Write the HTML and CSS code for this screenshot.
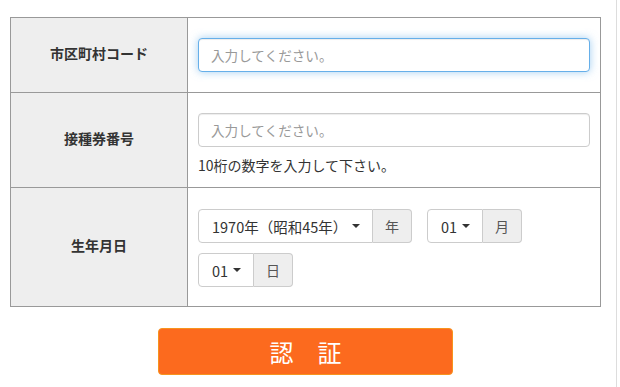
FILE: index.html
```html
<!DOCTYPE html>
<html lang="ja">
<head>
<meta charset="utf-8">
<link rel="stylesheet" href="styles.css">
</head>
<body>
<div class="page">
  <form class="auth">
    <table class="form-table">
      <tr class="row1">
        <th>市区町村コード</th>
        <td><input class="ctrl focus" type="text" placeholder="入力してください。"></td>
      </tr>
      <tr class="row2">
        <th>接種券番号</th>
        <td>
          <input class="ctrl" type="text" placeholder="入力してください。">
          <p class="help">10桁の数字を入力して下さい。</p>
        </td>
      </tr>
      <tr class="row3">
        <th>生年月日</th>
        <td>
          <div class="dates">
            <div class="group">
              <div class="sel year"><span>1970年（昭和45年）</span><i class="caret"></i></div>
              <div class="addon">年</div>
            </div>
            <div class="group">
              <div class="sel small"><span>01</span><i class="caret"></i></div>
              <div class="addon">月</div>
            </div>
            <div class="group">
              <div class="sel small"><span>01</span><i class="caret"></i></div>
              <div class="addon">日</div>
            </div>
          </div>
        </td>
      </tr>
    </table>
    <div class="actions">
      <button type="button" class="btn">認　証</button>
    </div>
  </form>
</div>
</body>
</html>
```

FILE: styles.css
```css
html, body {
  margin: 0;
  padding: 0;
  background: #fff;
}
body {
  font-family: "Noto Sans CJK JP", "Noto Sans", sans-serif;
  color: #333;
  font-size: 13px;
}
.page {
  width: 616px;
  height: 387px;
  border-right: 1px solid #ddd;
  box-sizing: content-box;
}
.auth {
  padding: 17px 0 0 10px;
  width: 591px;
}
.form-table {
  width: 591px;
  border-collapse: collapse;
  table-layout: fixed;
}
.form-table th,
.form-table td {
  border: 1px solid #999;
}
.form-table th {
  width: 176px;
  background: #eee;
  font-size: 14px;
  font-weight: bold;
  text-align: center;
  vertical-align: middle;
  padding: 0 0 4px;
}
.form-table td {
  padding: 20px 10px;
  vertical-align: top;
}
.row2 td {
  padding-bottom: 13px;
}
.row3 td {
  padding-top: 21px;
  padding-bottom: 19px;
}
.ctrl {
  display: block;
  box-sizing: border-box;
  width: 100%;
  height: 34px;
  padding: 6px 12px;
  border: 1px solid #ccc;
  border-radius: 4px;
  font-family: inherit;
  font-size: 13.6px;
  color: #333;
  background: #fff;
  box-shadow: inset 0 1px 1px rgba(0,0,0,.075);
  outline: none;
}
.ctrl::placeholder {
  color: #999;
}
.ctrl.focus {
  border-color: #66afe9;
  box-shadow: inset 0 1px 1px rgba(0,0,0,.075), 0 0 8px rgba(102,175,233,.6);
}
.help {
  margin: 9px 0 0;
  line-height: 18px;
  font-size: 14px;
  color: #333;
}
.dates {
  display: flex;
  flex-wrap: wrap;
  gap: 10px 15px;
}
.group {
  display: flex;
  height: 34px;
}
.sel {
  box-sizing: border-box;
  height: 34px;
  display: flex;
  align-items: center;
  justify-content: space-between;
  padding: 0 12px 0 13px;
  border: 1px solid #ccc;
  border-radius: 4px 0 0 4px;
  background: #fff;
  font-size: 14.5px;
  color: #333;
}
.sel.year {
  width: 175px;
}
.sel.small {
  width: 56px;
}
.caret {
  display: block;
  width: 0;
  height: 0;
  border-left: 4px solid transparent;
  border-right: 4px solid transparent;
  border-top: 4px solid #333;
}
.addon {
  box-sizing: border-box;
  width: 39px;
  height: 34px;
  display: flex;
  align-items: center;
  justify-content: center;
  background: #eee;
  border: 1px solid #ccc;
  border-left: 0;
  border-radius: 0 4px 4px 0;
  font-size: 14px;
  color: #555;
}
.actions {
  display: flex;
  justify-content: center;
  margin-top: 21px;
}
.btn {
  width: 295px;
  height: 47px;
  background: #fc6a1e;
  border: 1px solid #f7931e;
  border-radius: 4px;
  color: #fff;
  font-family: inherit;
  font-size: 24px;
  line-height: 1;
  padding: 0;
  cursor: pointer;
}
```
